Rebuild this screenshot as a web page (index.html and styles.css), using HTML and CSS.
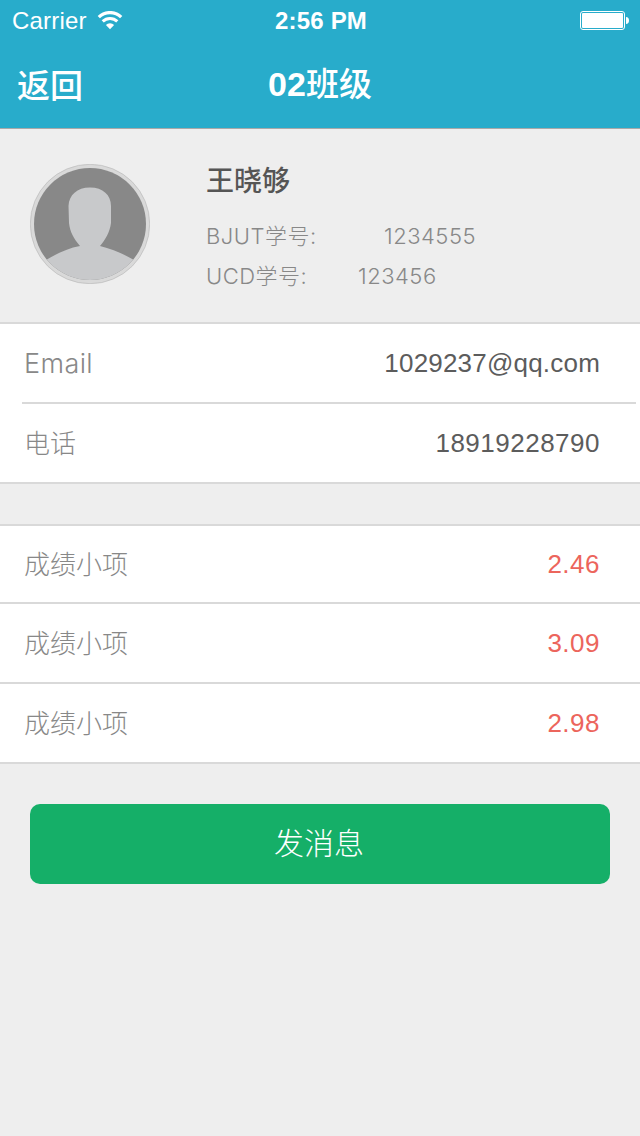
FILE: index.html
```html
<!DOCTYPE html>
<html lang="zh-CN">
<head>
    <meta charset="UTF-8">
    <meta name="viewport" content="width=device-width, initial-scale=1.0">
    <title>02班级</title>
    <link rel="stylesheet" href="styles.css">
</head>
<body>
    <header class="header">
        <!-- Status bar -->
        <div class="status-bar">
            <div class="carrier">
                <span>Carrier</span>
                <svg class="wifi" width="26" height="19" viewBox="0 0 26 19">
                    <path d="M1.8 6.2 A15.8 15.8 0 0 1 24.2 6.2" fill="none" stroke="#fff" stroke-width="3.2"/>
                    <path d="M5.7 10.4 A10.4 10.4 0 0 1 20.3 10.4" fill="none" stroke="#fff" stroke-width="3"/>
                    <path d="M8.9 14 A5.8 5.8 0 0 1 17.1 14 L13 18.3 Z" fill="#fff"/>
                </svg>
            </div>
            <div class="time">2:56 PM</div>
            <svg class="battery" width="50" height="20" viewBox="0 0 50 20">
                <rect x="0.5" y="0.5" width="44" height="18" rx="2.5" fill="none" stroke="#fff"/>
                <rect x="2" y="2" width="41" height="15" rx="1" fill="#fff"/>
                <path d="M46 6 C48 6 49 7.5 49 9.5 C49 11.5 48 13 46 13 Z" fill="#fff"/>
            </svg>
        </div>
        <!-- Navigation -->
        <nav class="nav-bar">
            <a href="#" class="back-btn">返回</a>
            <h1 class="title"><span class="title-number">02</span>班级</h1>
        </nav>
    </header>

    <!-- Student profile -->
    <section class="profile">
        <svg class="avatar" width="120" height="120" viewBox="0 0 120 120">
            <defs>
                <clipPath id="face"><circle cx="60" cy="60" r="56"/></clipPath>
            </defs>
            <circle cx="60" cy="60" r="59.7" fill="#d9d9d9" stroke="#b5b5b5" stroke-width="0.6"/>
            <circle cx="60" cy="60" r="56" fill="#888"/>
            <path clip-path="url(#face)" fill="#c8c9cb" d="M60 23.5 C73 23.5 81 31 81 42 L81 59 C80 68 75 76 70 82 C82 85 94 90 104 96 L104 120 L16 120 L16 96 C26 90 38 84 50 82 C44 75 40 68 39 59 L38.5 42 C39 31 47 23.5 60 23.5 Z"/>
        </svg>
        <div class="info">
            <h2 class="name">王晓够</h2>
            <p class="number"><span class="number-label bjut-label">BJUT学号:</span><span>1234555</span></p>
            <p class="number"><span class="number-label ucd-label">UCD学号:</span><span>123456</span></p>
        </div>
    </section>

    <!-- Contact -->
    <ul class="list contact">
        <li class="row"><span class="label label-en">Email</span><span class="value email">1029237@qq.com</span></li>
        <li class="row"><span class="label">电话</span><span class="value">18919228790</span></li>
    </ul>

    <!-- Scores -->
    <ul class="list scores">
        <li class="row"><span class="label">成绩小项</span><span class="value">2.46</span></li>
        <li class="row"><span class="label">成绩小项</span><span class="value">3.09</span></li>
        <li class="row"><span class="label">成绩小项</span><span class="value">2.98</span></li>
    </ul>

    <button class="message-btn">发消息</button>
</body>
</html>
```
FILE: styles.css
```css
/* Global styles */
* {
    box-sizing: border-box;
}

body {
    margin: 0;
    min-height: 1136px;
    background-color: #eee;
    font-family: "Liberation Sans", "Noto Sans CJK SC", sans-serif;
}

h1, h2, p, ul {
    margin: 0;
    padding: 0;
}

/* Header */
.header {
    height: 129px;
    background-color: #28accb;
    border-bottom: 1px solid #a9a9a9;
    color: #fff;
}

.status-bar,
.nav-bar {
    display: grid;
    grid-template-columns: 1fr auto 1fr;
    align-items: center;
}

.status-bar {
    height: 40px;
    padding: 0 10px 0 12px;
    font-size: 24px;
}

.carrier {
    display: flex;
    align-items: center;
    gap: 10px;
    padding-top: 1px;
    letter-spacing: 0.2px;
}

.time {
    padding-top: 1px;
    font-weight: bold;
    font-size: 24px;
    letter-spacing: 0.2px;
}

.battery {
    justify-self: end;
    margin-top: 1px;
}

.nav-bar {
    height: 88px;
    padding: 0 17px;
}

.back-btn {
    color: #fff;
    font-family: "Noto Sans CJK SC", sans-serif;
    font-size: 33px;
    font-weight: 500;
    line-height: 48px;
    padding-bottom: 1px;
    text-decoration: none;
}

.title {
    padding-bottom: 3px;
    font-family: "Noto Sans CJK SC", sans-serif;
    font-size: 33px;
    font-weight: 500;
    line-height: 48px;
}

.title-number {
    font-family: "Liberation Sans", sans-serif;
    font-size: 34px;
    font-weight: bold;
}

/* Profile */
.profile {
    display: flex;
    height: 193px;
    padding: 35px 30px 0;
    gap: 56px;
}

.info {
    padding-top: 2px;
}

.name {
    height: 32px;
    line-height: 32px;
    margin-bottom: 18px;
    color: #555;
    font-size: 28px;
    font-weight: 500;
}

.number {
    display: flex;
    height: 40px;
    line-height: 40px;
    color: #888;
    font-family: "Inter", "Noto Sans CJK SC", sans-serif;
    font-size: 22px;
    font-weight: 300;
    letter-spacing: 0.5px;
}

.bjut-label {
    width: 178px;
}

.ucd-label {
    width: 152px;
}

/* Lists */
.list {
    list-style: none;
    background-color: #fff;
    border-top: 2px solid #d9d9d9;
}

.row {
    display: flex;
    justify-content: space-between;
    align-items: center;
    height: 80px;
    padding: 0 40px 0 24px;
    border-bottom: 2px solid #d9d9d9;
    font-size: 26px;
}

.label {
    padding-bottom: 3px;
    color: #888;
    font-family: "Inter", "Noto Sans CJK SC", sans-serif;
    font-weight: 300;
}

.label-en {
    padding-bottom: 0;
    font-size: 27px;
    letter-spacing: 0.4px;
}

.value {
    padding-top: 1px;
    color: #5c5c5c;
    letter-spacing: 0.5px;
}

.email {
    letter-spacing: 0.2px;
}

.contact {
    margin-bottom: 40px;
}

.contact .row:first-child {
    margin: 0 4px 0 22px;
    padding: 0 36px 0 2px;
}

.scores .row:first-child {
    height: 78px;
}

.scores .value {
    color: #ec655c;
}

/* Button */
.message-btn {
    display: block;
    width: 580px;
    height: 80px;
    margin: 40px auto 0;
    padding: 0 8px 7px 6px;
    border: none;
    border-radius: 10px;
    background-color: #15af68;
    color: #fff;
    font-family: "Noto Sans CJK SC", sans-serif;
    font-size: 30px;
    font-weight: 300;
}
```
